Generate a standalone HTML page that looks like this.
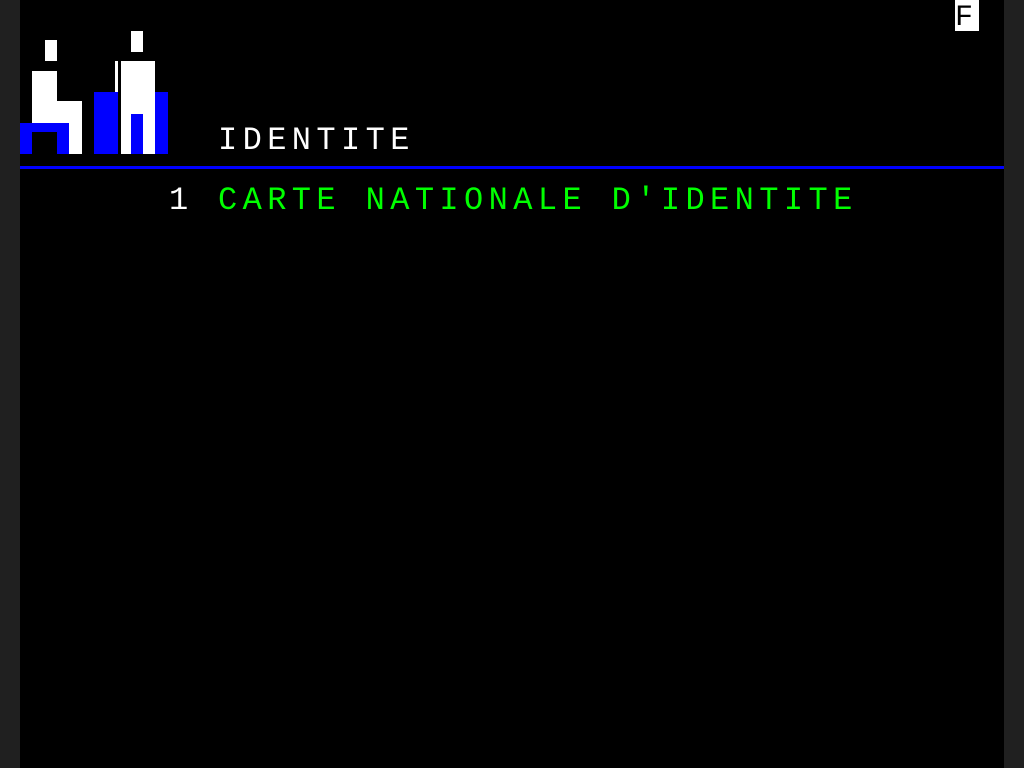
<!DOCTYPE html>
<html><head><meta charset="utf-8"><style>
html,body{margin:0;padding:0;}
body{width:1024px;height:768px;background:#202020;position:relative;overflow:hidden;}
#scr{position:absolute;left:20px;top:0;width:984px;height:768px;background:#000;}
.b{position:absolute;}
.w{background:#fff}.bl{background:#0000ff}
.t{position:absolute;font-family:"Liberation Mono",monospace;font-size:32px;line-height:32px;letter-spacing:5.4px;white-space:pre;}
</style></head><body>
<div id="scr"></div>
<div class="b w" style="left:45px;top:40px;width:12px;height:21px"></div>
<div class="b w" style="left:32px;top:71px;width:25px;height:52px"></div>
<div class="b w" style="left:57px;top:101px;width:25px;height:53px"></div>
<div class="b bl" style="left:20px;top:123px;width:49px;height:9px"></div>
<div class="b bl" style="left:20px;top:132px;width:12px;height:22px"></div>
<div class="b bl" style="left:57px;top:132px;width:12px;height:22px"></div>
<div class="b w" style="left:131px;top:31px;width:12px;height:21px"></div>
<div class="b w" style="left:115px;top:61px;width:3px;height:31px"></div>
<div class="b w" style="left:121px;top:61px;width:34px;height:93px"></div>
<div class="b bl" style="left:94px;top:92px;width:24px;height:62px"></div>
<div class="b bl" style="left:155px;top:92px;width:13px;height:62px"></div>
<div class="b bl" style="left:131px;top:114px;width:12px;height:40px"></div>
<div class="b bl" style="left:20px;top:166px;width:984px;height:3px"></div>
<div class="b w" style="left:955px;top:0;width:24px;height:31px"></div>
<div class="t" style="left:955px;top:2px;color:#000;font-size:30px">F</div>
<div class="t" style="left:218px;top:125px;color:#fff">IDENTITE</div>
<div class="t" style="left:169px;top:185px;color:#fff">1</div>
<div class="t" style="left:218px;top:185px;color:#00ff00">CARTE NATIONALE D'IDENTITE</div>
</body></html>
